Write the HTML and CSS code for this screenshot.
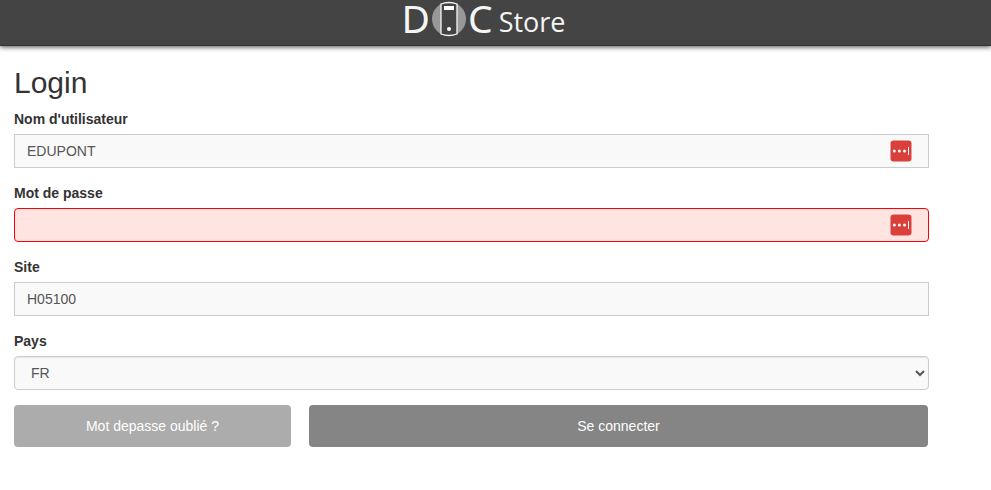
FILE: index.html
```html
<!DOCTYPE html>
<html lang="fr">
<head>
    <meta charset="UTF-8">
    <meta name="viewport" content="width=device-width, initial-scale=1.0">
    <title>DOC Store</title>
    <link rel="stylesheet" href="styles.css">
</head>
<body>
    <header class="navbar">
        <a class="logo" href="#">
            <span class="logo-letter">D</span>
            <svg class="logo-icon" width="34" height="36" viewBox="0 0 34 36" aria-hidden="true">
                <circle cx="17" cy="18" r="17" fill="#989898"/>
                <path d="M9 3Q17 0 25 3V33Q17 36 9 33Z" fill="#444" stroke="#f5f5f5" stroke-width="1.3"/>
                <rect x="12" y="5" width="10" height="4" fill="#fff"/>
                <circle cx="17" cy="28" r="2" fill="#fff"/>
            </svg>
            <span class="logo-letter">C</span>
            <span class="logo-name">Store</span>
        </a>
    </header>

    <main class="content">
        <h2>Login</h2>
        <form>
            <div class="form-group">
                <label for="username">Nom d'utilisateur</label>
                <div class="field">
                    <input class="form-control" type="text" id="username" value="EDUPONT">
                    <svg class="key-icon" width="22" height="22" viewBox="0 0 22 22" aria-hidden="true">
                        <rect x="0.5" y="0.5" width="21" height="21" rx="3" fill="#d9403a"/>
                        <g fill="#fff">
                            <circle cx="4.3" cy="11" r="1.5"/>
                            <circle cx="9.4" cy="11" r="1.5"/>
                            <circle cx="14.5" cy="11" r="1.5"/>
                            <rect x="18" y="7" width="1" height="8"/>
                        </g>
                    </svg>
                </div>
            </div>

            <div class="form-group">
                <label for="password">Mot de passe</label>
                <div class="field">
                    <input class="form-control error" type="password" id="password">
                    <svg class="key-icon" width="22" height="22" viewBox="0 0 22 22" aria-hidden="true">
                        <rect x="0.5" y="0.5" width="21" height="21" rx="3" fill="#d9403a"/>
                        <g fill="#fff">
                            <circle cx="4.3" cy="11" r="1.5"/>
                            <circle cx="9.4" cy="11" r="1.5"/>
                            <circle cx="14.5" cy="11" r="1.5"/>
                            <rect x="18" y="7" width="1" height="8"/>
                        </g>
                    </svg>
                </div>
            </div>

            <div class="form-group">
                <label for="site">Site</label>
                <input class="form-control" type="text" id="site" value="H05100">
            </div>

            <div class="form-group">
                <label for="country">Pays</label>
                <select class="form-control" id="country">
                    <option selected>FR</option>
                </select>
            </div>

            <div class="buttons">
                <button type="button" class="btn btn-forgot">Mot depasse oublié ?</button>
                <button type="submit" class="btn btn-login">Se connecter</button>
            </div>
        </form>
    </main>
</body>
</html>
```

FILE: styles.css
```css
* {
    box-sizing: border-box;
}

body {
    margin: 0;
    font-family: "Liberation Sans", Arial, sans-serif;
    font-size: 14px;
    line-height: 20px;
    color: #333;
    background: #fff;
}

.navbar {
    display: flex;
    justify-content: center;
    height: 46px;
    padding-right: 24px;
    background: #444;
    border-bottom: 1px solid #333;
    box-shadow: 0 1px 5px rgba(0, 0, 0, 0.7);
}

.logo {
    display: flex;
    align-items: flex-start;
    color: #f5f5f5;
    font-family: "Noto Sans", "Open Sans", sans-serif;
    line-height: 36px;
    text-decoration: none;
}

.logo-letter {
    font-size: 39px;
}

.logo-icon {
    margin: 1px 2px 0;
}

.logo-name {
    margin-left: 6px;
    font-family: "Open Sans", sans-serif;
    font-size: 27px;
    font-weight: 500;
    line-height: 44px;
}

.content {
    padding: 20px 62px 20px 14px;
}

h2 {
    margin: 0 0 10px;
    font-size: 30px;
    font-weight: 400;
    line-height: 33px;
}

.form-group {
    margin-bottom: 15px;
}

label {
    display: block;
    margin-bottom: 5px;
    font-weight: 700;
}

.field {
    position: relative;
}

.form-control {
    display: block;
    width: 100%;
    height: 34px;
    padding: 6px 12px;
    border: 1px solid #ccc;
    border-radius: 0;
    background-color: #f9f9f9;
    color: #555;
    font-family: inherit;
    font-size: 14px;
    line-height: 20px;
}

.form-control.error {
    border-color: #f00;
    border-radius: 4px;
    background-color: #ffe4e1;
}

select.form-control {
    border-radius: 4px;
    box-shadow: inset 0 1px 1px rgba(0, 0, 0, 0.08);
}

/* password manager badge */
.key-icon {
    position: absolute;
    top: 6px;
    right: 17px;
}

.buttons {
    display: grid;
    grid-template-columns: 277fr 619fr;
    gap: 18px;
    padding-right: 1px;
}

.btn {
    height: 42px;
    padding: 6px 12px;
    border: 0;
    border-radius: 4px;
    color: #fff;
    font-family: inherit;
    font-size: 14px;
    line-height: 20px;
    cursor: pointer;
}

.btn-forgot {
    background: #acacac;
}

.btn-login {
    background: #858585;
}
```
